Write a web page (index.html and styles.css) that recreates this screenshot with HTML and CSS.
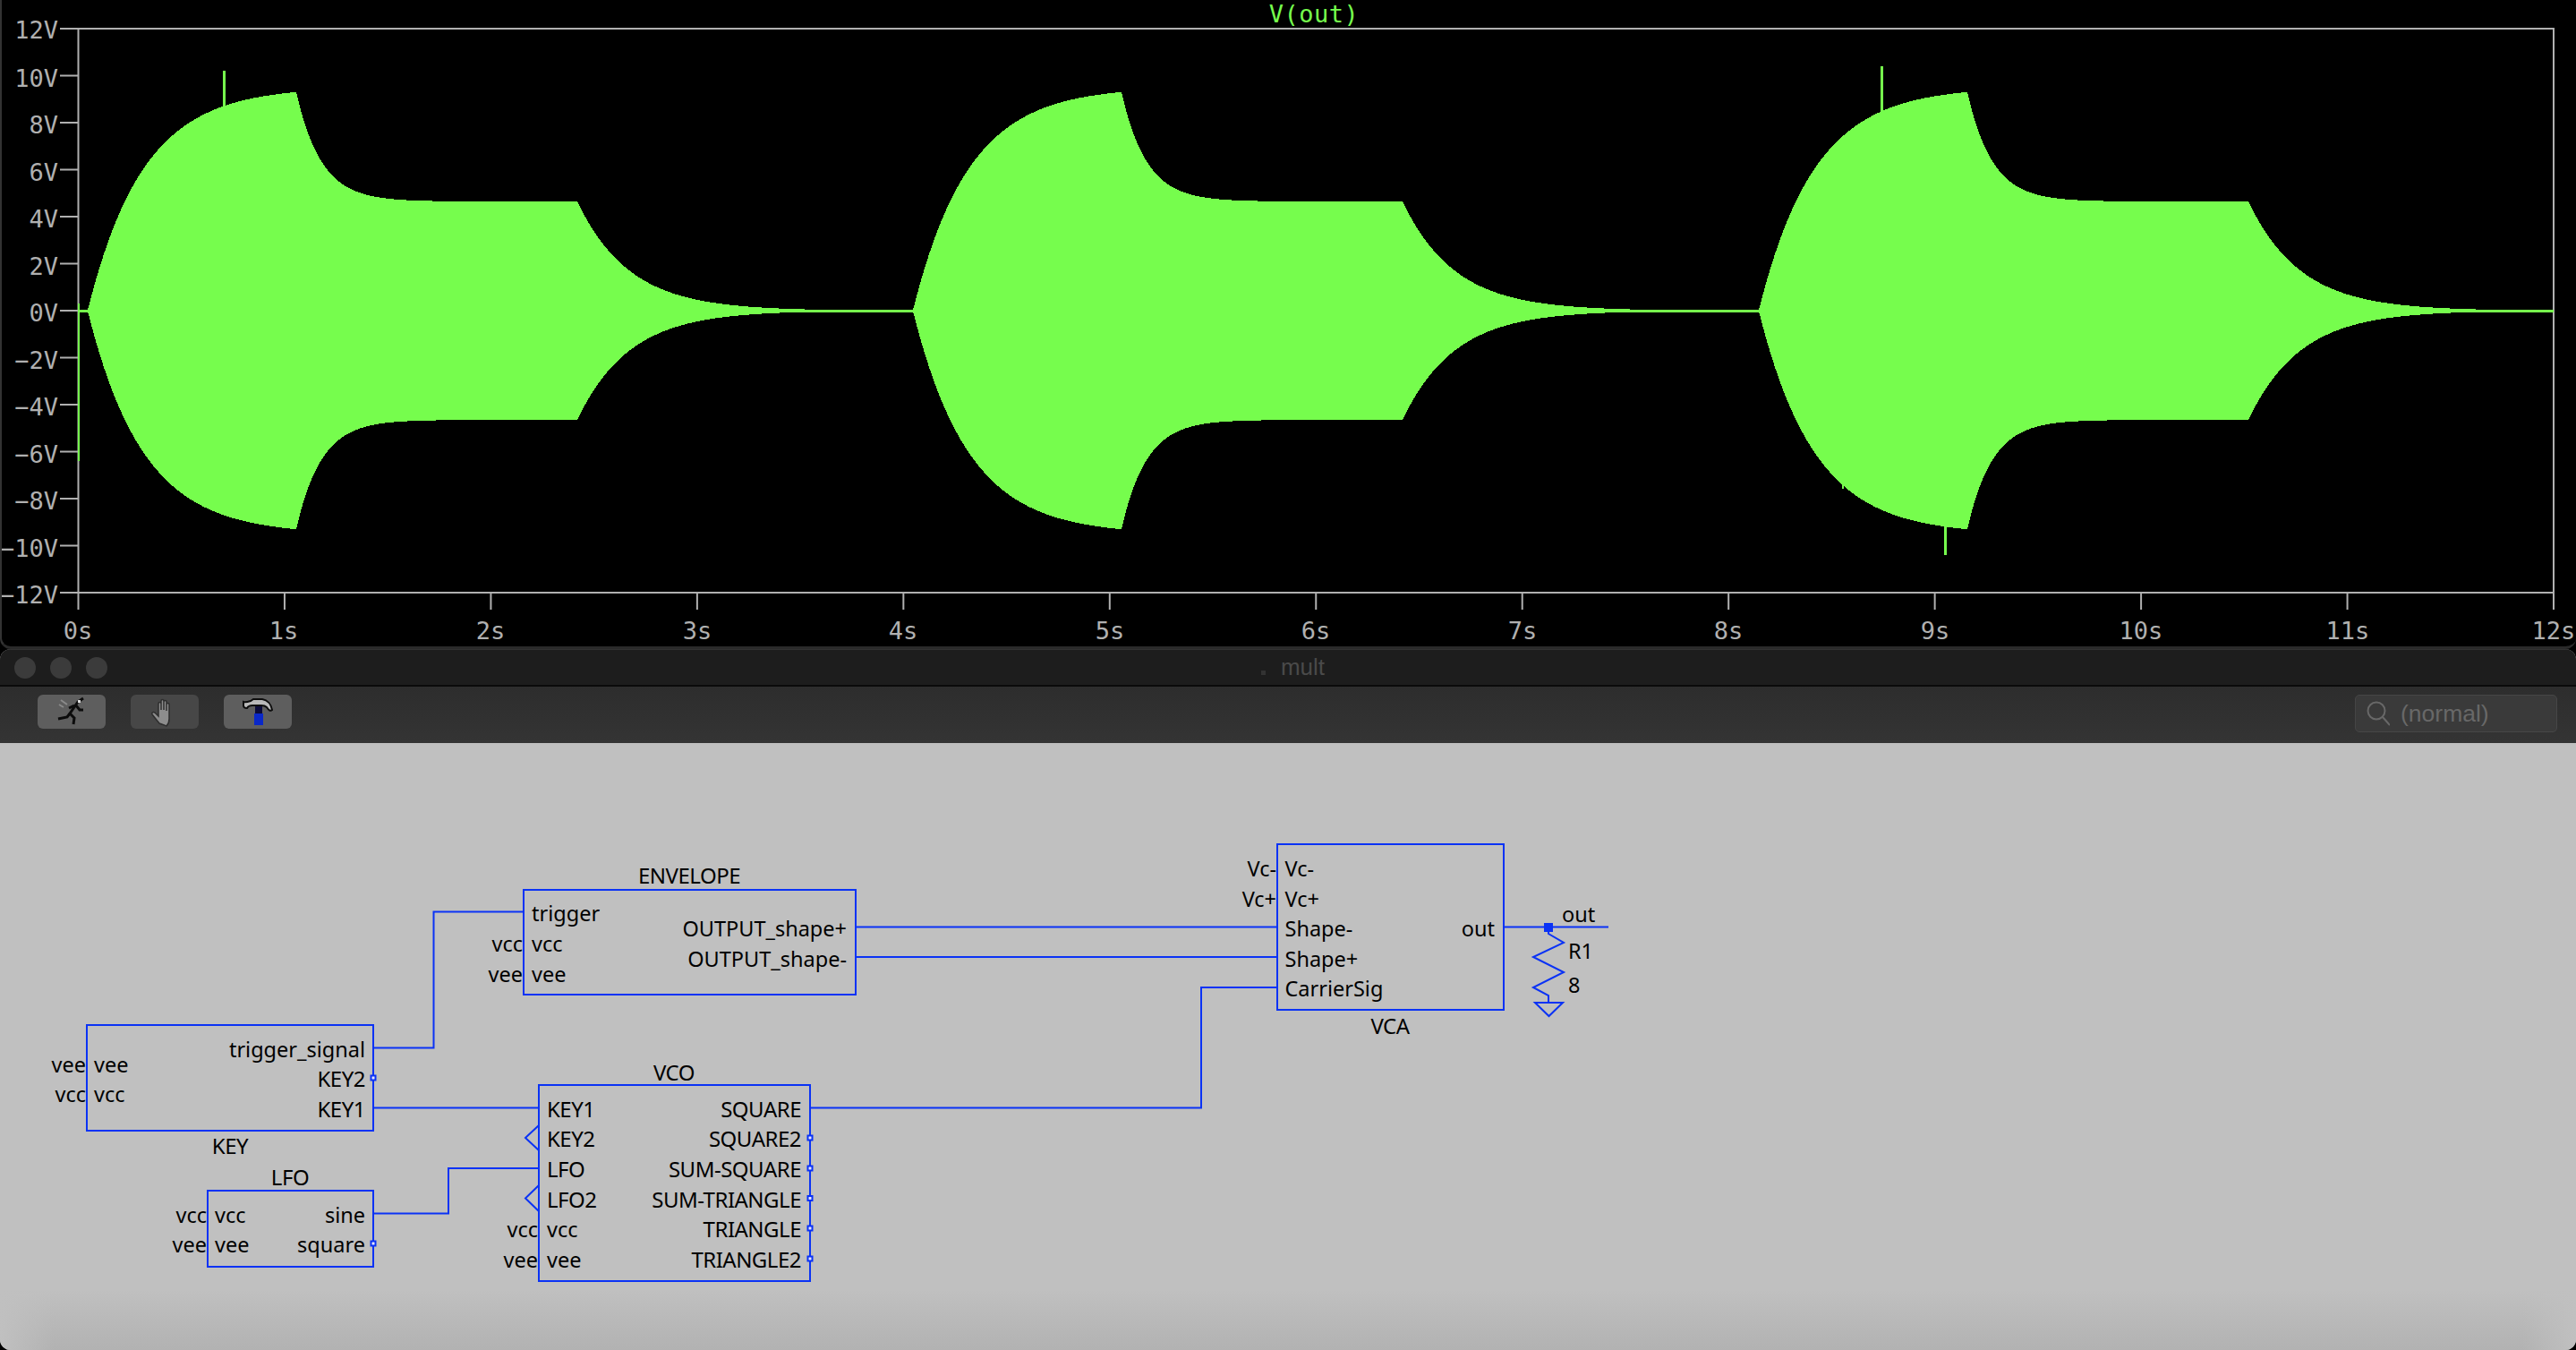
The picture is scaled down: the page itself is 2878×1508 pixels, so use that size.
FILE: index.html
```html
<!DOCTYPE html>
<html lang="en">
<head>
<meta charset="utf-8">
<title>mult</title>
<link rel="stylesheet" href="styles.css">
</head>
<body>
<section class="plot">
<svg class="plot-svg" width="2878" height="722" viewBox="0 0 2878 722" aria-label="V(out) plot">
  <g class="axis">
    <rect class="frame" x="87.5" y="32" width="2765.5" height="630"/>
    <path id="ticks" class="ticks" d=""/>
  </g>
  <g id="wave" class="wave"></g>
  <text class="trace" x="1468" y="25">V(out)</text>
  <g class="ylabels">
    <text x="65" y="43">12V</text><text x="65" y="96.500">10V</text><text x="65" y="149">8V</text><text x="65" y="201.500">6V</text><text x="65" y="254">4V</text><text x="65" y="306.500">2V</text><text x="65" y="359">0V</text><text x="65" y="411.500">−2V</text><text x="65" y="464">−4V</text><text x="65" y="516.500">−6V</text><text x="65" y="569">−8V</text><text x="65" y="621.500">−10V</text><text x="65" y="674">−12V</text>
  </g>
  <g class="xlabels">
    <text x="87" y="714">0s</text><text x="317" y="714">1s</text><text x="548" y="714">2s</text><text x="779" y="714">3s</text><text x="1009" y="714">4s</text><text x="1240" y="714">5s</text><text x="1470" y="714">6s</text><text x="1701" y="714">7s</text><text x="1931" y="714">8s</text><text x="2162" y="714">9s</text><text x="2392" y="714">10s</text><text x="2623" y="714">11s</text><text x="2853" y="714">12s</text>
  </g>
</svg>
</section>
<section class="window">
  <header class="titlebar">
    <div class="lights"><span class="light"></span><span class="light"></span><span class="light"></span></div>
    <div class="title"><span class="proxy"></span>mult</div>
  </header>
  <div class="toolbar">
    <div class="tools">
      <button class="tool">
        <svg width="34" height="34" viewBox="0 0 34 34"><path class="ic-speed" d="M5 4l7 5M3 9l5 3"/><path class="ic-run" d="M30 2L24 6L15 19L12 23L2 25M15 19L20 24L19 31M22 10L26 15L30 15M20 10L14 13"/><rect class="ic-eye" x="24" y="4" width="3" height="3"/></svg>
      </button>
      <button class="tool tool-off">
        <svg width="34" height="34" viewBox="0 0 34 34"><path class="ic-hand" d="M11 30l-8-10c-1-2 1-3 3-2l4 4V8c0-2 3-2 3 0v7-10c0-2 3-2 3 0v10-9c0-2 3-2 3 0v10-7c0-2 3-2 3 0v16c0 4-1 6-3 8z"/></svg>
      </button>
      <button class="tool">
        <svg width="34" height="34" viewBox="0 0 34 34"><rect class="ic-neck" x="14" y="10" width="8" height="9"/><rect class="ic-handle" x="13" y="19" width="10" height="13"/><path class="ic-head" d="M1 6C3 7 6 6 9 5L12 3H22C28 4 32 9 33 15C31 17 29 15 27 12C25 10 23 10 21 10H11C9 10 6 11 5 13C3 13 1 12 1 10Z"/></svg>
      </button>
    </div>
    <div class="search">
      <svg class="search-icon" width="26" height="36" viewBox="0 0 26 36"><circle cx="11" cy="15" r="9.500"/><path d="M18 22l8 9"/></svg>
      <span class="search-text">(normal)</span>
    </div>
  </div>
  <div class="canvas">
  <svg class="schematic" width="2878" height="678" viewBox="0 830 2878 678" aria-label="Schematic">
    <g class="wires">
      <path d="M955 1035.500H1427M955 1069H1427M905 1237.500H1342V1103H1427"/>
      <path d="M417 1170.500H484.500V1018.500H585M417 1237.500H602M417 1355.500H501V1305H602"/>
      <path d="M1680 1035.500H1797"/>
      <path d="M1730 1036V1043L1747 1053L1713 1069L1747 1086L1713 1103L1730 1112V1120"/>
      <path d="M1715 1120H1746L1730.500 1135Z"/>
      <path d="M602 1257L587 1271L602 1285M602 1324L587 1338.500L602 1353"/>
      <rect x="1427" y="943" width="253" height="185"/>
      <rect x="585" y="994" width="371" height="117"/>
      <rect x="97" y="1145" width="320" height="118"/>
      <rect x="232" y="1330" width="185" height="85"/>
      <rect x="602" y="1212" width="303" height="219"/>
    </g>
    <rect class="junction" x="1725" y="1031" width="10" height="10"/>
    <g class="ports">
      <rect x="414.500" y="1201.500" width="5" height="5"/>
      <rect x="414.500" y="1386.500" width="5" height="5"/>
      <rect x="902.500" y="1268.500" width="5" height="5"/>
      <rect x="902.500" y="1302.500" width="5" height="5"/>
      <rect x="902.500" y="1336" width="5" height="5"/>
      <rect x="902.500" y="1369.500" width="5" height="5"/>
      <rect x="902.500" y="1403.500" width="5" height="5"/>
    </g>
    <g class="sch-text">
      <text x="1435.500" y="979">Vc-</text><text x="1435.500" y="1013">Vc+</text><text x="1435.500" y="1046">Shape-</text><text x="1435.500" y="1080">Shape+</text><text x="1435.500" y="1113">CarrierSig</text>
      <text x="1745" y="1030">out</text><text x="1752" y="1071">R1</text><text x="1752" y="1109">8</text>
      <text x="594" y="1029">trigger</text><text x="594" y="1063">vcc</text><text x="594" y="1097">vee</text>
      <text x="105" y="1198">vee</text><text x="105" y="1231">vcc</text>
      <text x="240" y="1366">vcc</text><text x="240" y="1399">vee</text>
      <text class="caps" x="611" y="1248">KEY1</text><text class="caps" x="611" y="1281">KEY2</text><text class="caps" x="611" y="1315">LFO</text><text class="caps" x="611" y="1348.500">LFO2</text><text x="611" y="1382">vcc</text><text x="611" y="1416">vee</text>
    </g>
    <g class="sch-text end">
      <text x="1426" y="979">Vc-</text><text x="1426" y="1013">Vc+</text><text x="1670" y="1046">out</text>
      <text x="584" y="1063">vcc</text><text x="584" y="1097">vee</text>
      <text x="946" y="1046">OUTPUT_shape+</text><text x="946" y="1080">OUTPUT_shape-</text>
      <text x="96" y="1198">vee</text><text x="96" y="1231">vcc</text>
      <text x="408" y="1181">trigger_signal</text><text class="caps" x="408" y="1214">KEY2</text><text class="caps" x="408" y="1248">KEY1</text>
      <text x="231" y="1366">vcc</text><text x="231" y="1399">vee</text>
      <text x="408" y="1366">sine</text><text x="408" y="1399">square</text>
      <text x="601" y="1382">vcc</text><text x="601" y="1416">vee</text>
      <text class="caps" x="895" y="1248">SQUARE</text><text class="caps" x="895" y="1281">SQUARE2</text><text class="caps" x="895" y="1315">SUM-SQUARE</text><text class="caps" x="895" y="1348.500">SUM-TRIANGLE</text><text class="caps" x="895" y="1382">TRIANGLE</text><text class="caps" x="895" y="1416">TRIANGLE2</text>
    </g>
    <g class="sch-text mid">
      <text class="caps" x="1553" y="1155">VCA</text><text class="caps" x="770" y="987">ENVELOPE</text><text class="caps" x="257" y="1289">KEY</text><text class="caps" x="324" y="1324">LFO</text><text class="caps" x="753" y="1207">VCO</text>
    </g>
  </svg>
  </div>
</section>
<script src="plot.js"></script>
</body>
</html>
```
FILE: plot.js
```js
(function () {
  var NS = 'http://www.w3.org/2000/svg';
  var Z = 347;
  function env(t) {
    var RISE = 233, HOLD = 547;
    if (t <= 0) return 0;
    if (t < RISE) return 250 * (1 - Math.exp(-t / 62));
    if (t < HOLD) return 122 + 122 * Math.exp(-(t - RISE) / 28);
    return 122 * Math.exp(-(t - HOLD) / 58);
  }
  var wave = document.getElementById('wave');
  var starts = [98, 1020, 1965];
  var ends = [1020, 1965, 2853];
  starts.forEach(function (s, i) {
    var top = [], bot = [], e = ends[i];
    for (var x = s; x <= e; x += 1) {
      var a = Math.max(env(x - s), 1.5);
      top.push(x + ',' + (Z - a).toFixed(1));
      bot.unshift(x + ',' + (Z + a).toFixed(1));
    }
    var p = document.createElementNS(NS, 'polygon');
    p.setAttribute('points', top.concat(bot).join(' '));
    wave.appendChild(p);
  });
  [[87, 345.5, 12, 3], [249, 79, 3, 45], [2101, 74, 3, 52], [2172, 585, 3, 35], [87, 339, 2, 176], [2058, 541, 2, 5]].forEach(function (r) {
    var el = document.createElementNS(NS, 'rect');
    el.setAttribute('x', r[0]); el.setAttribute('y', r[1]);
    el.setAttribute('width', r[2]); el.setAttribute('height', r[3]);
    wave.appendChild(el);
  });
  var d = '';
  for (var v = 0; v <= 12; v++) d += 'M67 ' + (32 + v * 52.5) + 'H87';
  for (var s = 0; s <= 12; s++) d += 'M' + (87.5 + s * 230.46) + ' 662V681';
  document.getElementById('ticks').setAttribute('d', d);
})();
```
FILE: styles.css
```css
* { box-sizing: border-box; }
html, body { margin: 0; padding: 0; background: #000; width: 2878px; height: 1508px; overflow: hidden; }
body { display: flex; flex-direction: column; }
.plot { height: 725px; background: #000; border-left: 2px solid #333; overflow: hidden; border-bottom: 3px solid #2a2a2a; border-radius: 0 0 12px 12px; }
.plot-svg { display: block; margin-left: -2px; }
.wave { fill: #76fd4d; shape-rendering: crispEdges; }
.frame { fill: none; stroke: #b0b0b0; stroke-width: 2; }
.ticks { fill: none; stroke: #b0b0b0; stroke-width: 2; }
.plot-svg text { font-family: "DejaVu Sans Mono", monospace; font-size: 27px; }
.plot-svg .trace { fill: #76fd4d; text-anchor: middle; letter-spacing: 0.500px; }
.ylabels text { fill: #b0b0b0; text-anchor: end; }
.xlabels text { fill: #b0b0b0; text-anchor: middle; }
.window { flex: 1; display: flex; flex-direction: column; background: #c0c0c0; border-radius: 12px; overflow: hidden; }
.titlebar { height: 42px; display: flex; align-items: center; position: relative; background: #1d1d1d; border-bottom: 2px solid #0a0a0a; border-top: 1px solid #333; padding-left: 16px; }
.lights { display: flex; gap: 16px; }
.light { width: 24px; height: 24px; border-radius: 50%; background: #3b3b3b; }
.title { position: absolute; left: 0; right: 0; text-align: center; font: 26px "Liberation Sans", sans-serif; color: #4a4a4a; padding-left: 11px; }
.proxy { display: inline-block; width: 5px; height: 5px; background: #333; margin-right: 17px; }
.toolbar { height: 63px; display: flex; justify-content: space-between; align-items: flex-start; padding: 9px 21px 0 42px; background: linear-gradient(#2d2d2d, #343434); }
.tools { display: flex; gap: 28px; }
.tool { width: 76px; height: 38px; padding: 0; border: 0; border-radius: 6px; background: #5e5e5e; display: flex; align-items: center; justify-content: center; }
.tool-off { background: #474747; }
.ic-run { fill: none; stroke: #0c0c0c; stroke-width: 3; }
.ic-speed { fill: none; stroke: #8a8a8a; stroke-width: 2; }
.ic-eye { fill: #ddd; }
.ic-hand { fill: #8d8d8d; stroke: #2e2e2e; stroke-width: 1.500; }
.ic-head { fill: #b9b9b9; stroke: #0d0d0d; stroke-width: 2; }
.ic-neck { fill: #0b0b3a; }
.ic-handle { fill: #0a28c8; }
.search { width: 226px; height: 42px; display: flex; align-items: center; gap: 12px; padding-left: 12px; background: #3a3a3a; border: 1px solid #464646; border-radius: 5px; }
.search-icon { fill: none; stroke: #686868; stroke-width: 2; }
.search-text { font: 26.500px "Liberation Sans", sans-serif; color: #686868; }
.canvas { flex: 1; overflow: hidden; background:
  linear-gradient(to right, #c0c0c0, rgba(192,192,192,0) 60px) left bottom / 60px 70px no-repeat,
  linear-gradient(to left, #c0c0c0, rgba(192,192,192,0) 60px) right bottom / 60px 70px no-repeat,
  linear-gradient(#c0c0c0 90%, #b2b2b2); }
.schematic { display: block; }
.wires { fill: none; stroke: #0a32f5; stroke-width: 2; }
.junction { fill: #0a32f5; }
.ports { fill: #e6e6ff; stroke: #0a32f5; stroke-width: 2; }
.sch-text { font-family: "Noto Sans", sans-serif; font-size: 23.500px; fill: #000; }
.caps { font-size: 24px; letter-spacing: -0.500px; }
.end { text-anchor: end; }
.mid { text-anchor: middle; }
```
